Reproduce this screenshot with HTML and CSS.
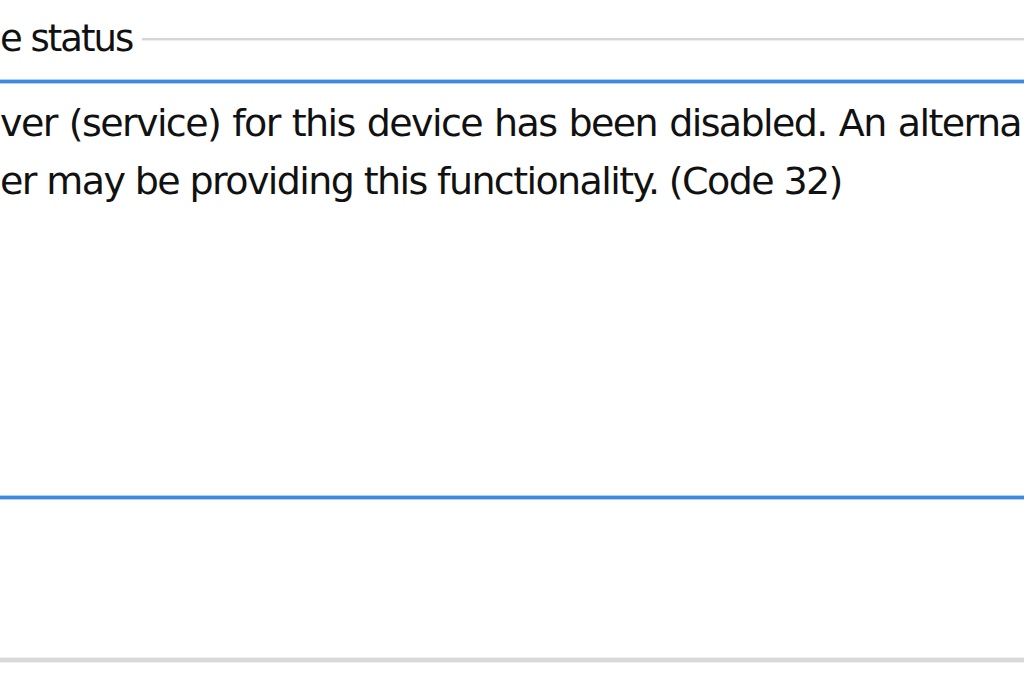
FILE: index.html
```html
<!DOCTYPE html>
<html lang="en">
<head>
<meta charset="utf-8">
<title>Device status</title>
<link rel="stylesheet" href="styles.css">
</head>
<body>
<div class="group">
  <div class="legend-row">
    <span class="legend">e status</span>
    <span class="legend-rule"></span>
  </div>
  <div class="status-box">
    <p class="status-text status-text--wide">ver (service) for this device has been disabled. An alterna</p>
    <p class="status-text">er may be providing this functionality. (Code 32)</p>
  </div>
  <div class="bottom-space"></div>
  <div class="bottom-rule"></div>
</div>
</body>
</html>
```

FILE: styles.css
```css
html, body {
  margin: 0;
  padding: 0;
  background: #ffffff;
  overflow: hidden;
}
body {
  width: 1024px;
  height: 683px;
  font-family: "DejaVu Sans", "Liberation Sans", sans-serif;
  color: #111111;
}
.group {
  display: flex;
  flex-direction: column;
}
.legend-row {
  display: flex;
  align-items: center;
  height: 58px;
  margin-top: 10px;
}
.legend {
  font-size: 37px;
  line-height: 58px;
  letter-spacing: -2px;
  white-space: nowrap;
}
.legend-rule {
  flex: 1;
  height: 2px;
  margin-left: 10px;
  background: #d6d6d6;
  box-shadow: 0 1px 0 #eeeeee;
}
.status-box {
  margin-top: 12px;
  height: 402px;
  border-top: 3px solid #4189e0;
  border-bottom: 3px solid #4189e0;
  box-shadow: 0 -1px 0 #b3cff2, 0 1px 0 #b3cff2, inset 0 1px 0 #b3cff2, inset 0 -1px 0 #b3cff2;
  padding-top: 11px;
  box-sizing: content-box;
}
.status-text {
  margin: 0;
  font-size: 38px;
  line-height: 58px;
  letter-spacing: -1.6px;
  white-space: nowrap;
}
.status-text--wide {
  word-spacing: 1.6px;
}
.bottom-space {
  height: 159px;
}
.bottom-rule {
  height: 4px;
  background: #d9d9d9;
  box-shadow: 0 -1px 0 #efefef, 0 1px 0 #efefef;
}
```
